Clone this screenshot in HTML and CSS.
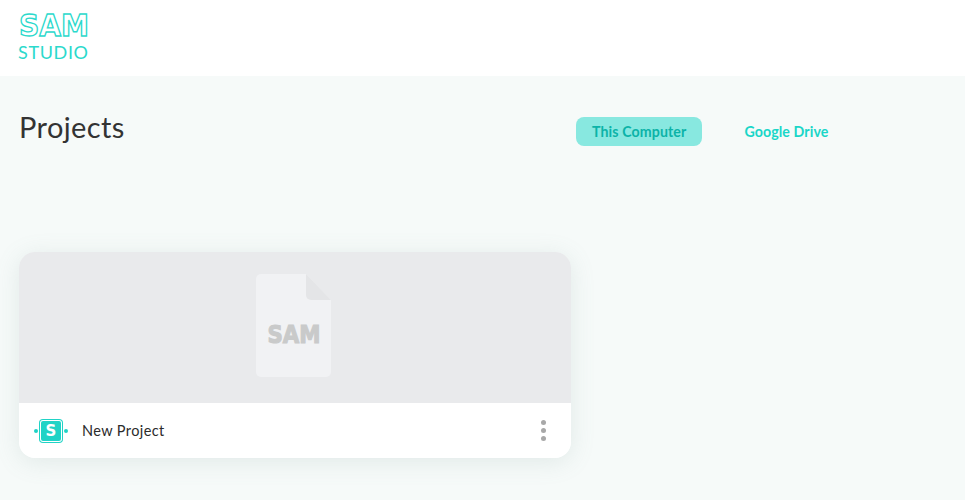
FILE: index.html
```html
<!DOCTYPE html>
<html lang="en">

<head>
   <meta charset="UTF-8">
   <meta name="viewport" content="width=device-width, initial-scale=1.0">
   <title>SAM Studio</title>
   <link rel="stylesheet" href="styles.css">
</head>

<body>
   <header class="topbar">
      <svg class="logo" width="90" height="62" viewBox="0 0 90 62" role="img" aria-label="SAM Studio">
         <text class="logo-sam" x="1" y="32" textLength="70" lengthAdjust="spacingAndGlyphs">SAM</text>
         <text class="logo-studio" x="0" y="55" textLength="70">STUDIO</text>
      </svg>
   </header>

   <main class="page">
      <div class="title-row">
         <h1 class="title">Projects</h1>
         <nav class="tabs">
            <button class="tab tab-active">This Computer</button>
            <button class="tab">Google Drive</button>
         </nav>
      </div>

      <section class="card">
         <div class="card-preview">
            <svg class="doc" width="76" height="103" viewBox="0 0 76 103">
               <path class="doc-sheet" d="M5 0H50L75 26V98a5 5 0 0 1-5 5H5a5 5 0 0 1-5-5V5a5 5 0 0 1 5-5z" />
               <path class="doc-fold" d="M50 0L75 26H55a5 5 0 0 1-5-5z" />
               <text class="doc-sam" x="11.5" y="69" textLength="53" lengthAdjust="spacingAndGlyphs">SAM</text>
            </svg>
         </div>
         <div class="card-footer">
            <span class="node">
               <span class="node-dot"></span>
               <span class="node-badge">S</span>
               <span class="node-dot"></span>
            </span>
            <span class="card-name">New Project</span>
            <button class="more" aria-label="More">
               <span></span><span></span><span></span>
            </button>
         </div>
      </section>
   </main>
</body>

</html>
```

FILE: styles.css
```css
body {
   margin: 0;
   min-height: 500px;
   overflow: hidden;
   background-color: #f6faf9;
   color: #333;
   font-family: "Lato", "Noto Sans", sans-serif;
}

.topbar {
   height: 76px;
   box-sizing: border-box;
   padding: 4px 0 0 18px;
   background-color: #fff;
}

.logo {
   display: block;
}

.logo-sam {
   fill: none;
   stroke: #2bd9cc;
   stroke-width: 1.4;
   font-family: "DejaVu Sans", sans-serif;
   font-weight: bold;
   font-size: 30px;
}

.logo-studio {
   fill: #2bd9cc;
   font-family: "Lato", sans-serif;
   font-weight: 400;
   font-size: 18px;
}

.page {
   padding: 0 19px;
}

.title-row {
   display: grid;
   grid-template-columns: 557px auto;
   align-items: start;
   height: 176px;
}

.title {
   margin: 32px 0 0;
   font-size: 29px;
   line-height: 38px;
   font-weight: 400;
   letter-spacing: 0.4px;
}

.tabs {
   display: flex;
   gap: 26px;
   margin-top: 41px;
}

.tab {
   height: 29px;
   padding: 0 16px;
   border: 0;
   border-radius: 8px;
   background: none;
   color: #1ad6c8;
   font-family: inherit;
   font-size: 14.2px;
   font-weight: 700;
   letter-spacing: 0.1px;
}

.tab-active {
   background-color: #88e8e0;
   color: #0cb3a8;
}

.card {
   width: 552px;
   border-radius: 16px;
   overflow: hidden;
   box-shadow: 0 4px 24px rgba(120, 150, 145, 0.16);
}

.card-preview {
   display: flex;
   justify-content: center;
   height: 151px;
   box-sizing: border-box;
   padding: 22px 2px 0 0;
   background-color: #e9eaec;
}

.doc-sheet {
   fill: #f1f2f4;
}

.doc-fold {
   fill: #e4e5e7;
}

.doc-sam {
   fill: #c9caca;
   stroke: #c9caca;
   stroke-width: 1.2;
   font-family: "DejaVu Sans", sans-serif;
   font-weight: bold;
   font-size: 25px;
}

.card-footer {
   display: flex;
   align-items: center;
   height: 55px;
   padding: 0 25px 0 15px;
   background-color: #fff;
}

.node {
   display: flex;
   align-items: center;
   gap: 2px;
   margin-right: 14px;
}

.node-dot {
   width: 4px;
   height: 4px;
   border-radius: 50%;
   background-color: #20d3c6;
}

.node-badge {
   width: 22px;
   height: 22px;
   border-radius: 3px;
   background-color: #20d3c6;
   box-shadow: inset 0 0 0 1px #fff, 0 0 0 1px #20d3c6;
   color: #fff;
   font-family: "DejaVu Sans", sans-serif;
   font-size: 15px;
   font-weight: 700;
   line-height: 22px;
   text-align: center;
}

.card-name {
   flex: 1;
   font-size: 14.5px;
   letter-spacing: 0.4px;
   color: #2b2b2b;
}

.more {
   display: flex;
   flex-direction: column;
   gap: 2.7px;
   padding: 0;
   border: 0;
   background: none;
}

.more span {
   width: 5px;
   height: 5px;
   border-radius: 50%;
   background-color: #a8a8a8;
}
```
